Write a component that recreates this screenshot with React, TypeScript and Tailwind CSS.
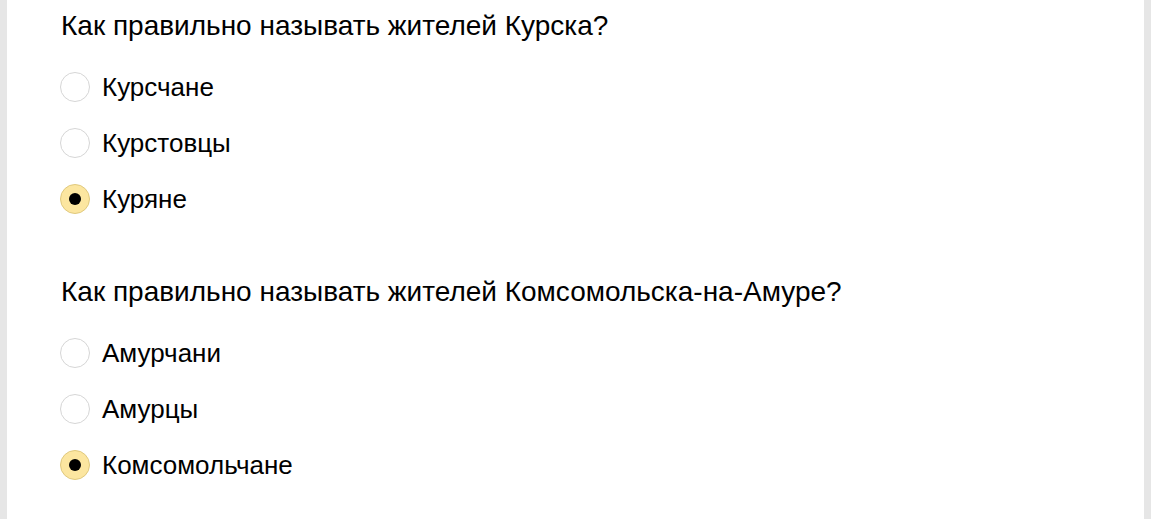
import React, { useState } from "react";

type Question = {
  title: string;
  options: string[];
  answer: number;
};

const questions: Question[] = [
  {
    title: "Как правильно называть жителей Курска?",
    options: ["Курсчане", "Курстовцы", "Куряне"],
    answer: 2,
  },
  {
    title: "Как правильно называть жителей Комсомольска-на-Амуре?",
    options: ["Амурчани", "Амурцы", "Комсомольчане"],
    answer: 2,
  },
];

const Radio: React.FC<{ checked: boolean }> = ({ checked }) => (
  <span
    className={
      checked
        ? "flex h-[30px] w-[30px] shrink-0 items-center justify-center rounded-full border border-[#e0c97e] bg-[#fce6a0]"
        : "flex h-[30px] w-[30px] shrink-0 items-center justify-center rounded-full border border-[#d6d6d6] bg-white"
    }
  >
    {checked && <span className="h-[12px] w-[12px] rounded-full bg-black" />}
  </span>
);

const App: React.FC = () => {
  const [answers, setAnswers] = useState<number[]>(questions.map((q) => q.answer));

  return (
    <div className="flex h-[519px] w-full bg-[#e6e6e6] px-[7px] font-['Liberation_Sans',Arial,sans-serif] text-black">
      <div className="flex-1 overflow-hidden bg-white pl-[53px]">
        {questions.map((q, qi) => (
          <div key={qi} className={qi === 0 ? "pt-[9px]" : "pt-[59px]"}>
            <h2 className="pl-[1px] text-[28px] leading-[34px]">{q.title}</h2>
            <div className="mt-[27px] flex flex-col gap-[22px]">
              {q.options.map((opt, oi) => (
                <label
                  key={oi}
                  className="flex h-[34px] cursor-pointer items-center gap-[12px]"
                  onClick={() =>
                    setAnswers((prev) => prev.map((a, i) => (i === qi ? oi : a)))
                  }
                >
                  <Radio checked={answers[qi] === oi} />
                  <span className="text-[26px] leading-[34px]">{opt}</span>
                </label>
              ))}
            </div>
          </div>
        ))}
      </div>
    </div>
  );
};

export default App;
